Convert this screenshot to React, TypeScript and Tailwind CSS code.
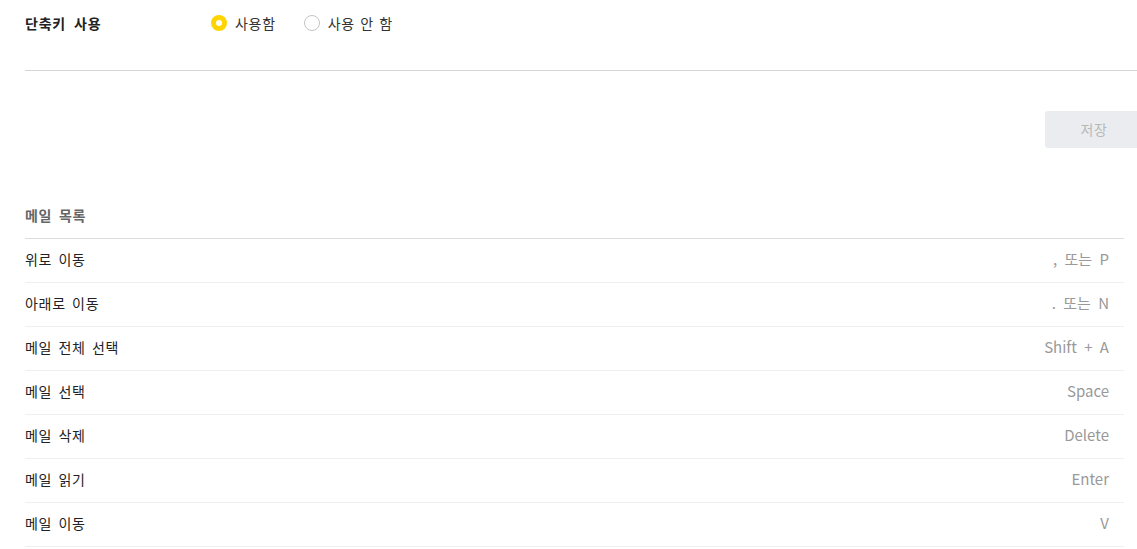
const rows: [string, string][] = [
  ['위로 이동', ', 또는 P'],
  ['아래로 이동', '. 또는 N'],
  ['메일 전체 선택', 'Shift + A'],
  ['메일 선택', 'Space'],
  ['메일 삭제', 'Delete'],
  ['메일 읽기', 'Enter'],
  ['메일 이동', 'V'],
];

function Radio({ checked, label }: { checked: boolean; label: string }) {
  return (
    <label className="flex items-center gap-[8px] cursor-pointer">
      {checked ? (
        <span className="flex h-[16px] w-[16px] items-center justify-center rounded-full bg-[#ffd400]">
          <span className="h-[6px] w-[6px] rounded-full bg-white" />
        </span>
      ) : (
        <span className="h-[16px] w-[16px] rounded-full border border-[#c4c4c4] bg-white" />
      )}
      <span className="text-[14px] text-[#333] tracking-[0.7px] [word-spacing:1.5px]">{label}</span>
    </label>
  );
}

export default function App() {
  return (
    <div
      className="min-h-screen bg-white pl-[25px] text-[#222]"
      style={{ fontFamily: '"Noto Sans CJK KR", "Noto Sans", sans-serif' }}
    >
      {/* 단축키 사용 */}
      <div className="mb-[40px] flex h-[71px] items-start border-b border-[#d4d4d4] pt-[12px]">
        <div className="w-[186px] text-[14px] font-bold leading-[22px] tracking-[0.8px] [word-spacing:4px]">
          단축키 사용
        </div>
        <div className="flex items-center gap-[28px] leading-[22px]">
          <Radio checked label="사용함" />
          <Radio checked={false} label="사용 안 함" />
        </div>
      </div>

      <div className="flex justify-end">
        <button className="h-[37px] w-[92px] rounded-l-[3px] bg-[#eaecf0] pl-[6px] text-[14px] text-[#b8b8b8] tracking-[0.7px]">
          저장
        </button>
      </div>

      {/* 메일 목록 */}
      <div className="mt-[50px] mr-[13px]">
        <div className="flex h-[41px] items-center border-b border-[#dcdcdc] pb-[6px] text-[14px] font-bold text-[#666] tracking-[0.7px] [word-spacing:3px]">
          메일 목록
        </div>
        {rows.map(([name, key]) => (
          <div
            key={name}
            className="flex h-[44px] items-center justify-between border-b border-[#efefef] pb-[3px] pr-[15px]"
          >
            <span className="text-[14px] text-[#222] tracking-[0.7px] [word-spacing:2.5px]">{name}</span>
            <span className="text-[15px] text-[#999] [word-spacing:4px]">{key}</span>
          </div>
        ))}
      </div>
    </div>
  );
}
